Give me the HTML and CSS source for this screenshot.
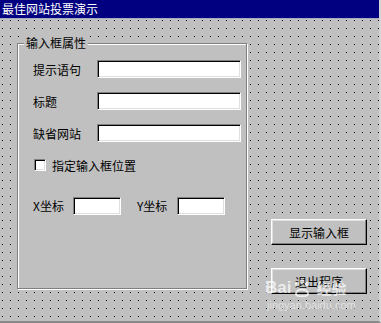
FILE: index.html
```html
<!DOCTYPE html>
<html lang="zh-CN">
<head>
    <meta charset="UTF-8">
    <meta name="viewport" content="width=device-width, initial-scale=1.0">
    <title>最佳网站投票演示</title>
    <link rel="stylesheet" href="styles.css">
</head>
<body>
    <div class="window">
        <div class="titlebar">最佳网站投票演示</div>
        <div class="client">
            <div class="group">
                <span class="legend">输入框属性</span>
                <div class="row">
                    <span class="label">提示语句</span>
                    <span class="field wide"></span>
                </div>
                <div class="row">
                    <span class="label">标题</span>
                    <span class="field wide"></span>
                </div>
                <div class="row">
                    <span class="label">缺省网站</span>
                    <span class="field wide"></span>
                </div>
                <div class="row check-row">
                    <span class="checkbox"></span>
                    <span>指定输入框位置</span>
                </div>
                <div class="row pos-row">
                    <span class="pos-label">X坐标</span>
                    <span class="field small"></span>
                    <span class="pos-label y">Y坐标</span>
                    <span class="field small"></span>
                </div>
            </div>
            <div class="buttons">
                <div class="button">显示输入框</div>
                <div class="button">退出程序</div>
            </div>
            <div class="watermark">
                <div class="wm-logo">
                    <span>Bai</span>
                    <svg width="20" height="20" viewBox="0 0 20 20">
                        <circle cx="5" cy="6" r="2.2" fill="#fff"/>
                        <circle cx="10" cy="3.5" r="2.2" fill="#fff"/>
                        <circle cx="15" cy="6" r="2.2" fill="#fff"/>
                        <path d="M4 16 C4 10 16 10 16 16 C16 19 4 19 4 16 Z" fill="none" stroke="#fff" stroke-width="2"/>
                    </svg>
                    <span class="wm-cn">经验</span>
                </div>
                <div class="wm-url">jingyan.baidu.com</div>
            </div>
        </div>
    </div>
</body>
</html>
```

FILE: styles.css
```css
body {
    margin: 0;
    padding: 0;
    font-family: "Noto Sans CJK SC", "DejaVu Sans", sans-serif;
    font-size: 12px;
    color: #000;
    background: #c0c0c0;
}

.window {
    width: 381px;
    height: 323px;
    display: flex;
    flex-direction: column;
    box-sizing: border-box;
    border-bottom: 2px solid #8a8a8a;
    border-right: 2px solid #d4d4d4;
    overflow: hidden;
}

.titlebar {
    height: 18px;
    line-height: 17px;
    padding-left: 2px;
    background: #000080;
    color: #fff;
    font-size: 12px;
    border-bottom: 1px solid #a8acc8;
}

.client {
    flex: 1;
    position: relative;
    display: flex;
    background-color: #c0c0c0;
    background-image: radial-gradient(circle at 0.5px 0.5px, #111 0.7px, transparent 0.9px);
    background-size: 8px 8px;
    background-position: 2px 1px;
}

.group {
    position: relative;
    margin: 24px 0 0 17px;
    width: 230px;
    height: 246px;
    border: 1px solid #808080;
    box-shadow: inset 1px 1px #fff, 1px 1px #fff;
    background: #c0c0c0;
    padding: 16px 0 0 15px;
    box-sizing: border-box;
}

.legend {
    position: absolute;
    top: -9px;
    left: 6px;
    padding: 0 2px;
    background: #c0c0c0;
    line-height: 16px;
}

.row {
    display: flex;
    align-items: center;
    height: 18px;
    margin-bottom: 14px;
}

.label {
    width: 64px;
}

.field {
    display: block;
    height: 18px;
    box-sizing: border-box;
    background: #fff;
    border-top: 1px solid #808080;
    border-left: 1px solid #808080;
    border-right: 1px solid #fff;
    border-bottom: 1px solid #fff;
    box-shadow: inset 1px 1px #000, inset -1px -1px #dfdfdf;
}

.wide {
    width: 144px;
}

.small {
    width: 48px;
}

.check-row {
    margin-top: 7px;
    margin-bottom: 23px;
    padding-left: 1px;
}

.checkbox {
    width: 12px;
    height: 12px;
    box-sizing: border-box;
    margin-right: 6px;
    background: #fff;
    border-top: 1px solid #808080;
    border-left: 1px solid #808080;
    border-right: 1px solid #fff;
    border-bottom: 1px solid #fff;
    box-shadow: inset 1px 1px #000, inset -1px -1px #dfdfdf;
}

.pos-row {
    align-items: flex-start;
}

.pos-label {
    width: 40px;
    line-height: 16px;
    margin-top: 1px;
}

.pos-label.y {
    margin-left: 16px;
}

.buttons {
    display: flex;
    flex-direction: column;
    gap: 23px;
    margin: 200px 0 0 24px;
}

.button {
    width: 96px;
    height: 26px;
    box-sizing: border-box;
    background: #c0c0c0;
    border-top: 1px solid #fff;
    border-left: 1px solid #fff;
    border-right: 1px solid #000;
    border-bottom: 1px solid #000;
    box-shadow: inset -1px -1px #808080, inset 1px 1px #dfdfdf;
    display: flex;
    align-items: center;
    justify-content: center;
    font-size: 12px;
}

.watermark {
    position: absolute;
    left: 265px;
    top: 258px;
    color: rgba(255, 255, 255, 0.7);
    font-family: "Liberation Sans", sans-serif;
}

.wm-logo {
    display: flex;
    align-items: center;
    gap: 1px;
    font-size: 17px;
    font-weight: bold;
    line-height: 22px;
}

.wm-logo svg {
    opacity: 0.7;
}

.wm-cn {
    font-family: "Noto Sans CJK SC", sans-serif;
    font-size: 15px;
    margin-left: 3px;
}

.wm-url {
    font-size: 11px;
    line-height: 13px;
    margin-left: 2px;
    color: rgba(255, 255, 255, 0.55);
}
```
